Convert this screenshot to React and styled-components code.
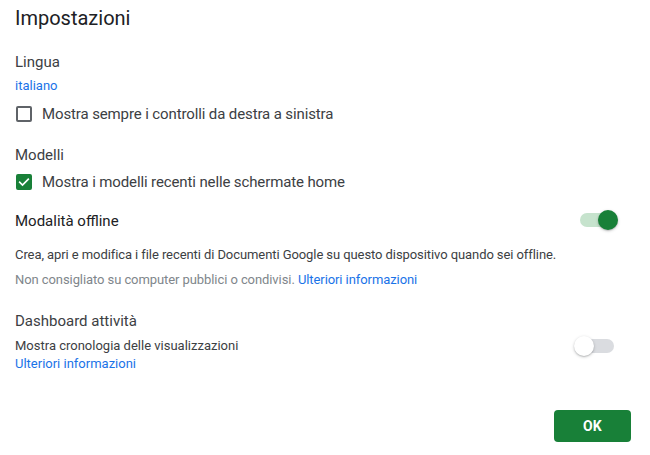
import React from "react";
import styled, { createGlobalStyle } from "styled-components";

const GlobalStyle = createGlobalStyle`
  body {
    margin: 0;
    background: #ffffff;
    font-family: Roboto, "Liberation Sans", Arial, sans-serif;
  }
`;

const Check = () => (
  <svg width="12" height="12" viewBox="0 0 24 24">
    <path
      d="M3.5 12.5l5.5 5.5L20.5 6.5"
      fill="none"
      stroke="#ffffff"
      strokeWidth="3.4"
      strokeLinecap="square"
    />
  </svg>
);

const App = () => {
  return (
    <>
      <GlobalStyle />
      <Dialog>
        <Title>Impostazioni</Title>

        <Section $top={22}>
          <Label>Lingua</Label>
          <LangLink href="#">italiano</LangLink>
          <CheckRow $top={8}>
            <Box />
            <CheckText>Mostra sempre i controlli da destra a sinistra</CheckText>
          </CheckRow>
        </Section>

        <Section $top={19}>
          <Label>Modelli</Label>
          <CheckRow $top={5}>
            <Box $checked>
              <Check />
            </Box>
            <CheckText>Mostra i modelli recenti nelle schermate home</CheckText>
          </CheckRow>
        </Section>

        <Section $top={15}>
          <ToggleRow>
            <Heading>Modalità offline</Heading>
            <Toggle $on>
              <Knob $on />
            </Toggle>
          </ToggleRow>
          <Para $top={9}>
            Crea, apri e modifica i file recenti di Documenti Google su questo
            dispositivo quando sei offline.
          </Para>
          <Para $muted>
            Non consigliato su computer pubblici o condivisi.{" "}
            <InfoLink href="#">Ulteriori informazioni</InfoLink>
          </Para>
        </Section>

        <Section $top={19}>
          <Label>Dashboard attività</Label>
          <DashRow>
            <TextBlock>
              <Small>Mostra cronologia delle visualizzazioni</Small>
              <Small>
                <InfoLink href="#">Ulteriori informazioni</InfoLink>
              </Small>
            </TextBlock>
            <Toggle $shift>
              <Knob />
            </Toggle>
          </DashRow>
        </Section>

        <Footer>
          <OkButton>OK</OkButton>
        </Footer>
      </Dialog>
    </>
  );
};

export default App;

const Dialog = styled.div`
  display: flex;
  flex-direction: column;
  width: 650px;
  height: 455px;
  box-sizing: border-box;
  padding: 6px 36px 0 15px;
  background: #ffffff;
`;

const Title = styled.div`
  font-size: 20px;
  line-height: 24px;
  color: #202124;
`;

const Section = styled.div`
  display: flex;
  flex-direction: column;
  margin-top: ${(p) => p.$top}px;
`;

const Label = styled.div`
  font-size: 15px;
  line-height: 20px;
  color: #3c4043;
`;

const Heading = styled.div`
  font-size: 15px;
  line-height: 24px;
  color: #202124;
`;

const LangLink = styled.a`
  margin-top: 6px;
  font-size: 13px;
  line-height: 16px;
  color: #1a73e8;
  text-decoration: none;
`;

const CheckRow = styled.div`
  display: flex;
  align-items: center;
  height: 24px;
  margin-top: ${(p) => p.$top}px;
`;

const Box = styled.div`
  display: flex;
  align-items: center;
  justify-content: center;
  width: 16px;
  height: 16px;
  margin-left: 1px;
  box-sizing: border-box;
  border-radius: 2px;
  border: 2px solid ${(p) => (p.$checked ? "#188038" : "#5f6368")};
  background: ${(p) => (p.$checked ? "#188038" : "transparent")};
`;

const CheckText = styled.span`
  margin-left: 10px;
  font-size: 15px;
  letter-spacing: -0.12px;
  color: #3c4043;
`;

const ToggleRow = styled.div`
  display: flex;
  align-items: center;
  justify-content: space-between;
  height: 24px;
`;

const Toggle = styled.div`
  position: relative;
  width: 34px;
  height: 14px;
  border-radius: 7px;
  background: ${(p) => (p.$on ? "#c6e3cd" : "#dadce0")};
  margin-top: ${(p) => (p.$shift ? "2px" : "-3px")};
  flex-shrink: 0;
`;

const Knob = styled.div`
  position: absolute;
  top: -3px;
  left: ${(p) => (p.$on ? "18px" : "-6px")};
  width: 20px;
  height: 20px;
  border-radius: 50%;
  background: ${(p) => (p.$on ? "#188038" : "#ffffff")};
  box-shadow: 0 1px 3px rgba(60, 64, 67, 0.3), 0 1px 1px rgba(60, 64, 67, 0.15);
`;

const Para = styled.div`
  margin-top: ${(p) => p.$top || 0}px;
  font-size: 13px;
  line-height: 25px;
  letter-spacing: -0.08px;
  color: ${(p) => (p.$muted ? "#80868b" : "#3c4043")};
`;

const InfoLink = styled.a`
  color: #1a73e8;
  text-decoration: none;
`;

const DashRow = styled.div`
  display: flex;
  align-items: flex-start;
  justify-content: space-between;
  margin-top: 6px;
`;

const TextBlock = styled.div`
  display: flex;
  flex-direction: column;
`;

const Small = styled.div`
  font-size: 13px;
  line-height: 18px;
  color: #3c4043;
`;

const Footer = styled.div`
  display: flex;
  justify-content: flex-end;
  margin-top: 37px;
  margin-right: -17px;
`;

const OkButton = styled.button`
  width: 77px;
  height: 32px;
  border: none;
  border-radius: 4px;
  background: #188038;
  color: #ffffff;
  font-family: Roboto, "Liberation Sans", Arial, sans-serif;
  font-size: 14px;
  font-weight: 700;
  letter-spacing: 0.3px;
  cursor: pointer;
`;
